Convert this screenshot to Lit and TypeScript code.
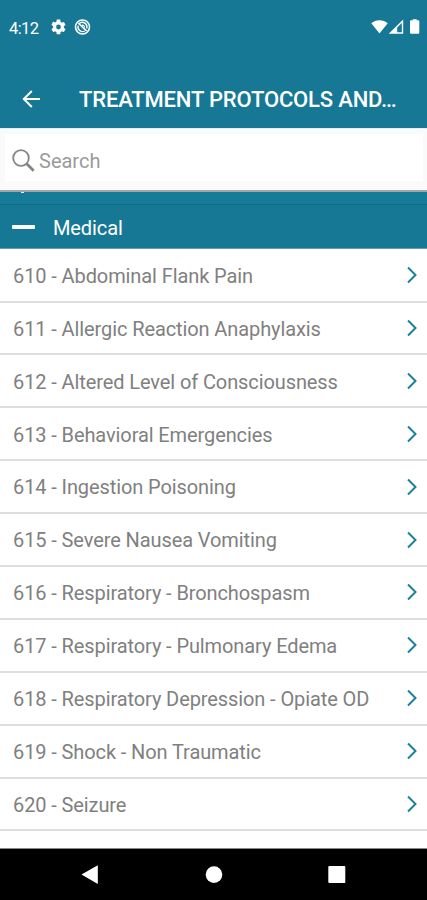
import { LitElement, html, css } from "lit";
import { customElement, property } from "lit/decorators.js";

@customElement("protocol-row")
class ProtocolRow extends LitElement {
  @property() label = "";

  static styles = css`
    :host {
      display: flex;
      align-items: center;
      justify-content: space-between;
      box-sizing: border-box;
      height: 52.9px;
      padding: 0 9px 0 13px;
      border-bottom: 2px solid #dedede;
      color: #808080;
      background: #fff;
    }
    .label {
      font-size: 20px;
      line-height: 24px;
      letter-spacing: -0.1px;
      white-space: nowrap;
      padding-top: 1.4px;
    }
    svg {
      display: block;
      flex: none;
    }
  `;

  render() {
    return html`
      <span class="label">${this.label}</span>
      <svg width="12" height="18" viewBox="0 0 12 18" fill="none" stroke="#1b809c" stroke-width="2">
        <path d="M2 1.5 9.5 9 2 16.5" />
      </svg>
    `;
  }
}

@customElement("app-root")
class AppRoot extends LitElement {
  private protocols = [
    "610 - Abdominal Flank Pain",
    "611 - Allergic Reaction Anaphylaxis",
    "612 - Altered Level of Consciousness",
    "613 - Behavioral Emergencies",
    "614 - Ingestion Poisoning",
    "615 - Severe Nausea Vomiting",
    "616 - Respiratory - Bronchospasm",
    "617 - Respiratory - Pulmonary Edema",
    "618 - Respiratory Depression - Opiate OD",
    "619 - Shock - Non Traumatic",
    "620 - Seizure",
  ];

  static styles = css`
    :host {
      display: flex;
      flex-direction: column;
      width: 427px;
      height: 900px;
      overflow: hidden;
      background: #fff;
      color: #fff;
      font-family: Roboto, "Liberation Sans", sans-serif;
    }
    svg {
      display: block;
      flex: none;
    }
    .status {
      display: flex;
      align-items: center;
      box-sizing: border-box;
      height: 54px;
      padding: 0 7px 0 9px;
      background: #167895;
    }
    .time {
      width: 42px;
      font-size: 16.5px;
      line-height: 20px;
      letter-spacing: -0.6px;
      padding-top: 4px;
    }
    .notices {
      display: flex;
      gap: 8px;
      flex: 1;
    }
    .bar {
      display: flex;
      align-items: center;
      box-sizing: border-box;
      height: 74px;
      padding: 15px 0 0 22px;
      background: #167895;
    }
    .title {
      margin: 3px 0 0 39px;
      font-size: 22px;
      line-height: 28px;
      font-weight: 500;
      letter-spacing: -0.17px;
      white-space: nowrap;
    }
    .search {
      box-sizing: border-box;
      height: 64px;
      padding: 5px 4px 9px 5px;
      background: #fafafa;
      border-top: 1px solid #e2f0f4;
      border-bottom: 2px solid #a4a4a4;
    }
    .field {
      display: flex;
      align-items: center;
      box-sizing: border-box;
      height: 47px;
      padding: 6px 0 0 7px;
      gap: 4px;
      background: #fff;
      color: #9b9b9b;
      font-size: 20px;
    }
    .previous {
      box-sizing: border-box;
      height: 13px;
      padding-left: 21px;
      background: #167b96;
      border-bottom: 1px solid #106b83;
    }
    .speck {
      width: 3px;
      height: 1px;
      background: #e6f3f6;
    }
    .section {
      display: flex;
      align-items: center;
      box-sizing: border-box;
      height: 44px;
      padding-left: 12px;
      background: #167895;
      border-bottom: 1px solid #5f9fb2;
      font-size: 20px;
      letter-spacing: -0.1px;
    }
    .section span {
      padding-top: 2px;
    }
    .minus {
      width: 23px;
      height: 4px;
      margin-right: 18px;
      border-radius: 1px;
      background: #fff;
    }
    .list {
      flex: 1;
      overflow: hidden;
      padding-top: 0.7px;
    }
    .nav {
      box-sizing: border-box;
      height: 52px;
      background: #000;
      border-top: 1px solid #888;
    }
  `;

  render() {
    return html`
      <div class="status">
        <span class="time">4:12</span>
        <div class="notices">
          <svg width="15" height="16" viewBox="2 2 20 20" fill="#fff">
            <path
              d="M19.14 12.94a7 7 0 0 0 0-1.88l2.03-1.58a.5.5 0 0 0 .12-.61l-1.92-3.32a.5.5 0 0 0-.59-.22l-2.39.96a7 7 0 0 0-1.62-.94l-.36-2.54A.5.5 0 0 0 13.92 2h-3.84a.5.5 0 0 0-.48.41l-.36 2.54a7 7 0 0 0-1.62.94l-2.39-.96a.5.5 0 0 0-.59.22L2.72 8.87a.5.5 0 0 0 .12.61l2.03 1.58a7 7 0 0 0 0 1.88l-2.03 1.58a.5.5 0 0 0-.12.61l1.92 3.32c.12.22.37.29.59.22l2.39-.96c.5.38 1.03.7 1.62.94l.36 2.54c.05.24.24.41.48.41h3.84c.24 0 .44-.17.47-.41l.36-2.54a7 7 0 0 0 1.62-.94l2.39.96c.22.08.47 0 .59-.22l1.92-3.32a.5.5 0 0 0-.12-.61zM12 15.2a3.2 3.2 0 1 1 0-6.4 3.2 3.2 0 0 1 0 6.4z"
            />
          </svg>
          <svg width="17" height="16" viewBox="0 0 17 16" fill="none" stroke="#fff">
            <circle cx="8.5" cy="8" r="7" stroke-width="1.6" />
            <path d="M5.2 4.6A4.6 4.6 0 0 1 12.6 9.6M4.2 6.6A4.6 4.6 0 0 0 10.8 12" stroke-width="1.4" />
            <path d="M4.4 4.2 12.6 12" stroke-width="1.6" />
            <path d="M8 6.2A2.2 2.2 0 0 1 10.6 8.4" stroke-width="1.1" />
          </svg>
        </div>
        <svg width="49" height="16" viewBox="0 0 49 16" fill="#fff">
          <path d="M0.3 4.2C4.8.2 12.2.2 16.7 4.2L8.5 14.5z" />
          <path
            fill-rule="evenodd"
            d="M17.7 14.7 32.2 0.6V14.7zM26.2 13.3H30.8V4L26.2 8.5z"
          />
          <path d="M39 2.3a1 1 0 0 1 1-1h1.7V.2h4v1.1h1.6a1 1 0 0 1 1 1v11.5a1 1 0 0 1-1 1H40a1 1 0 0 1-1-1z" />
        </svg>
      </div>
      <div class="bar">
        <svg width="18" height="18" viewBox="0 0 18 18" fill="none" stroke="#fff" stroke-width="2">
          <path d="M18 9H2M9.8 1 1.8 9 9.8 17" />
        </svg>
        <span class="title">TREATMENT PROTOCOLS AND…</span>
      </div>
      <div class="search">
        <div class="field">
          <svg width="23" height="23" viewBox="0 0 23 23" fill="none" stroke="#858585">
            <circle cx="9" cy="9" r="7.8" stroke-width="1.8" />
            <path d="M14.7 14.7 21.7 21.7" stroke-width="2.8" />
          </svg>
          <span>Search</span>
        </div>
      </div>
      <div class="previous"><div class="speck"></div></div>
      <div class="section">
        <div class="minus"></div>
        <span>Medical</span>
      </div>
      <div class="list">
        ${this.protocols.map((p) => html`<protocol-row .label=${p}></protocol-row>`)}
      </div>
      <div class="nav">
        <svg width="427" height="51" viewBox="0 -1 427 51" fill="#fff">
          <path d="M81.5 24.5 97.8 15.3V34z" />
          <circle cx="214" cy="24.6" r="8.3" />
          <rect x="328.3" y="16" width="17" height="17" rx="1" />
        </svg>
      </div>
    `;
  }
}
